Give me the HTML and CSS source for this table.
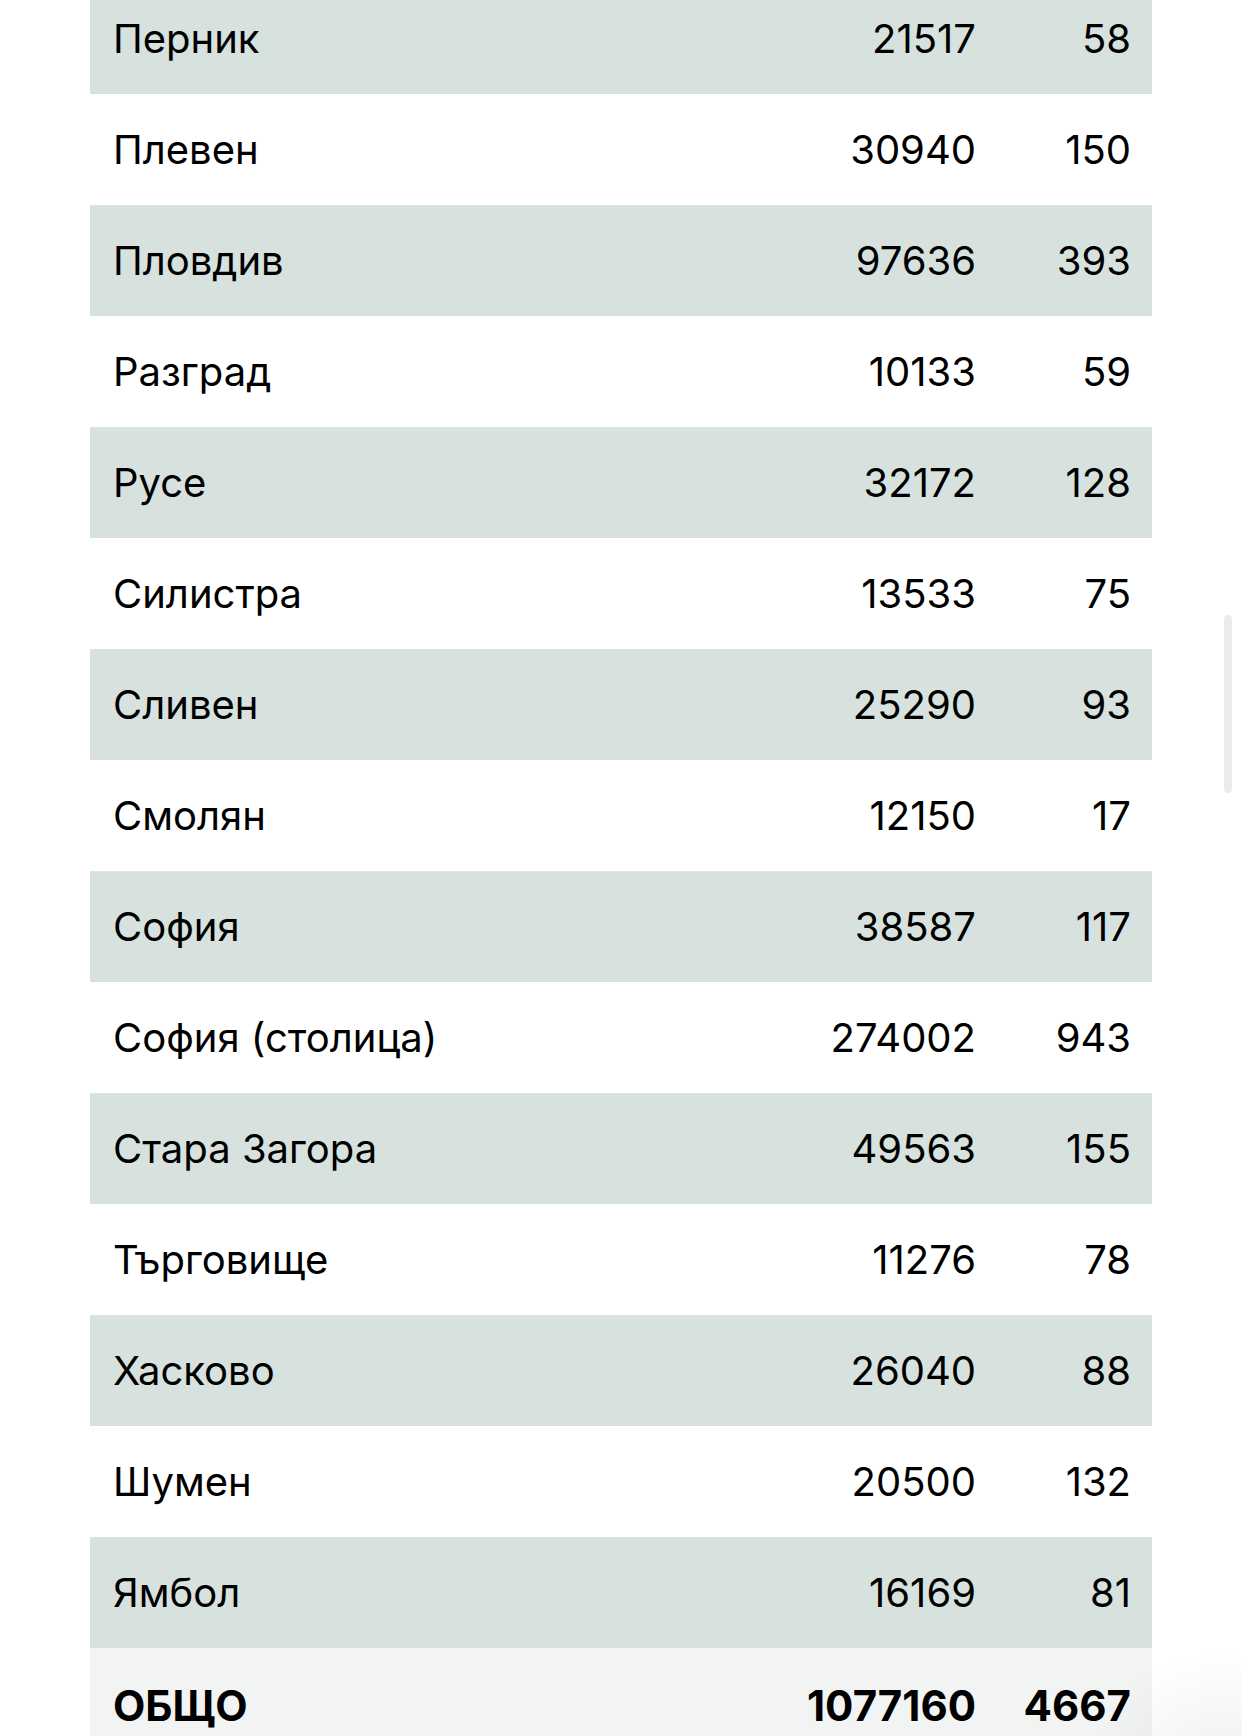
FILE: index.html
```html
<!DOCTYPE html>
<html lang="bg">
<head>
<meta charset="utf-8">
<link rel="stylesheet" href="styles.css">
</head>
<body>
<div class="page">
  <div class="table">
    <div class="row alt"><span class="name">Перник</span><span class="num">21517</span><span class="num">58</span></div>
    <div class="row"><span class="name">Плевен</span><span class="num">30940</span><span class="num">150</span></div>
    <div class="row alt"><span class="name">Пловдив</span><span class="num">97636</span><span class="num">393</span></div>
    <div class="row"><span class="name">Разград</span><span class="num">10133</span><span class="num">59</span></div>
    <div class="row alt"><span class="name">Русе</span><span class="num">32172</span><span class="num">128</span></div>
    <div class="row"><span class="name">Силистра</span><span class="num">13533</span><span class="num">75</span></div>
    <div class="row alt"><span class="name">Сливен</span><span class="num">25290</span><span class="num">93</span></div>
    <div class="row"><span class="name">Смолян</span><span class="num">12150</span><span class="num">17</span></div>
    <div class="row alt"><span class="name">София</span><span class="num">38587</span><span class="num">117</span></div>
    <div class="row"><span class="name">София (столица)</span><span class="num">274002</span><span class="num">943</span></div>
    <div class="row alt"><span class="name">Стара Загора</span><span class="num">49563</span><span class="num">155</span></div>
    <div class="row"><span class="name">Търговище</span><span class="num">11276</span><span class="num">78</span></div>
    <div class="row alt"><span class="name">Хасково</span><span class="num">26040</span><span class="num">88</span></div>
    <div class="row"><span class="name">Шумен</span><span class="num">20500</span><span class="num">132</span></div>
    <div class="row alt"><span class="name">Ямбол</span><span class="num">16169</span><span class="num">81</span></div>
    <div class="row total"><span class="name">ОБЩО</span><span class="num">1077160</span><span class="num">4667</span></div>
  </div>
  <div class="scrollbar"></div>
  <div class="shade"></div>
</div>
</body>
</html>
```

FILE: styles.css
```css
html, body {
  margin: 0;
  padding: 0;
  background: #ffffff;
}
body {
  width: 1242px;
  height: 1736px;
  overflow: hidden;
}
.page {
  position: relative;
  width: 1242px;
  height: 1736px;
  overflow: hidden;
}
.table {
  margin: -17px 0 0 90px;
  width: 1062px;
  display: flex;
  flex-direction: column;
  font-family: "Inter", "Liberation Sans", sans-serif;
  color: #000;
}
.row {
  display: grid;
  grid-template-columns: 1fr 240px 155px;
  align-items: center;
  height: 111px;
  background: #ffffff;
  font-size: 40px;
}
.row.alt {
  background: #d7e1de;
  box-shadow: inset 0 1px 0 #dfe7e4;
}
.row > span {
  padding: 0 21px 0 23px;
  line-height: 1;
  white-space: nowrap;
}
.num {
  text-align: right;
}
.row.total {
  background: #f2f4f3;
  font-weight: 700;
  font-size: 42px;
}
.row.total > span {
  padding-top: 4px;
}
.scrollbar {
  position: absolute;
  left: 1224px;
  top: 615px;
  width: 8px;
  height: 178px;
  border-radius: 4px;
  background: #ebebeb;
}
.shade {
  position: absolute;
  left: 1080px;
  top: 1640px;
  width: 200px;
  height: 140px;
  background: radial-gradient(ellipse at 70% 90%, rgba(0,0,0,0.06), rgba(0,0,0,0) 65%);
  pointer-events: none;
}
```
